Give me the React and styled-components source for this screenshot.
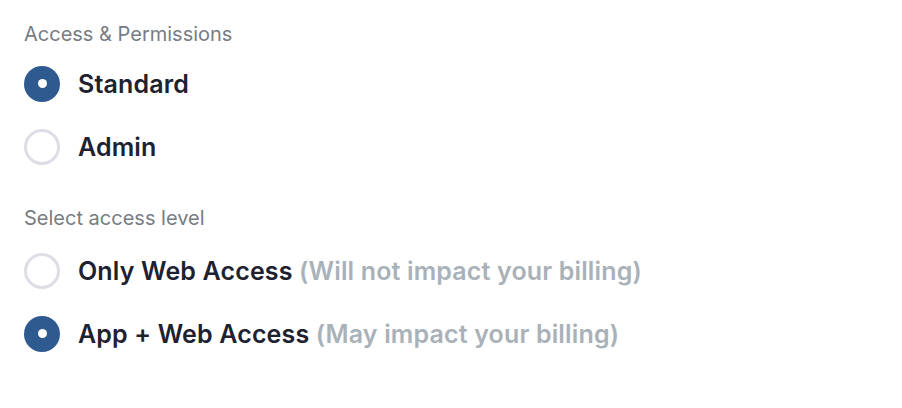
import React, { useState } from "react";
import styled, { createGlobalStyle } from "styled-components";

const GlobalStyle = createGlobalStyle`
  body {
    margin: 0;
    background: #ffffff;
    font-family: Inter, "Liberation Sans", sans-serif;
  }
`;

const Page = styled.div`
  padding: 22px 24px;
  display: flex;
  flex-direction: column;
  gap: 28px;
`;

const Section = styled.fieldset`
  border: none;
  margin: 0;
  padding: 0;
  display: flex;
  flex-direction: column;
`;

const Legend = styled.div`
  font-size: 20px;
  line-height: 24px;
  color: #777c82;
  margin-bottom: ${(props) => props.gap}px;
`;

const Option = styled.label`
  height: 63px;
  display: flex;
  align-items: center;
  gap: 18px;
  cursor: pointer;
`;

const Dot = styled.span`
  width: 36px;
  height: 36px;
  box-sizing: border-box;
  border-radius: 50%;
  flex-shrink: 0;
  display: flex;
  align-items: center;
  justify-content: center;
  background: ${(props) => (props.checked ? "#2f5a90" : "#ffffff")};
  border: ${(props) => (props.checked ? "none" : "3.5px solid #dedde6")};

  &::after {
    content: "";
    display: ${(props) => (props.checked ? "block" : "none")};
    width: 9px;
    height: 9px;
    border-radius: 50%;
    background: #ffffff;
  }
`;

const Title = styled.span`
  font-size: 25px;
  font-weight: 600;
  letter-spacing: 0.15px;
  color: #1d2130;
`;

const Hint = styled.span`
  color: #a9b1b9;
`;

const RadioGroup = ({ legend, gap, options, value, onChange }) => (
  <Section>
    <Legend gap={gap}>{legend}</Legend>
    {options.map((opt) => (
      <Option key={opt.id} onClick={() => onChange(opt.id)}>
        <Dot checked={value === opt.id} />
        <Title>
          {opt.title}
          {opt.hint && <Hint> ({opt.hint})</Hint>}
        </Title>
      </Option>
    ))}
  </Section>
);

const App = () => {
  const [role, setRole] = useState("standard");
  const [access, setAccess] = useState("app");

  return (
    <>
      <GlobalStyle />
      <Page>
        <RadioGroup
          legend="Access & Permissions"
          gap={6}
          value={role}
          onChange={setRole}
          options={[
            { id: "standard", title: "Standard" },
            { id: "admin", title: "Admin" },
          ]}
        />
        <RadioGroup
          legend="Select access level"
          gap={9}
          value={access}
          onChange={setAccess}
          options={[
            { id: "web", title: "Only Web Access", hint: "Will not impact your billing" },
            { id: "app", title: "App + Web Access", hint: "May impact your billing" },
          ]}
        />
      </Page>
    </>
  );
};

export default App;
